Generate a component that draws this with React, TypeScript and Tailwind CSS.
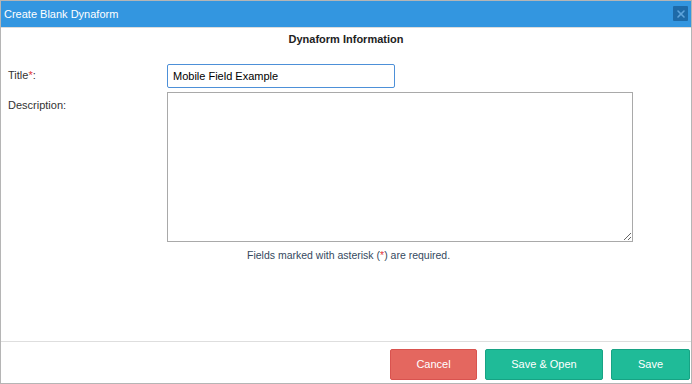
import { X } from "lucide-react";

const font = { fontFamily: '"Liberation Sans", Arial, sans-serif' };

function Label({ text, required }: { text: string; required?: boolean }) {
  return (
    <label className="block w-[166px] shrink-0 pl-[7px] text-[11px] text-[#333]">
      {text}
      {required && <span className="text-[#e2353b]">*</span>}:
    </label>
  );
}

export default function App() {
  return (
    <div
      className="flex h-[384px] w-[692px] flex-col border border-[#b5b5b5] bg-white"
      style={font}
    >
      <div className="flex h-[27px] shrink-0 items-center justify-between border-b border-[#dcdcdc] bg-[#3396e0] pl-[3px] pr-[3px]">
        <span className="text-[11px] text-white">Create Blank Dynaform</span>
        <button className="mb-[1px] flex h-[15px] w-[15px] items-center justify-center rounded-[1px] bg-[#1e6aa8]">
          <X size={12} strokeWidth={3.2} className="text-[#5fa4dc]" />
        </button>
      </div>

      <div className="flex flex-1 flex-col">
        <h2 className="mt-[3px] text-center text-[11px] font-bold text-[#222]">
          Dynaform Information
        </h2>

        <div className="mt-[16px] flex items-center">
          <Label text="Title" required />
          <input
            className="h-[24px] w-[228px] rounded-[2px] border border-[#4d90d8] px-[5px] text-[11px] text-black outline-none"
            defaultValue="Mobile Field Example"
          />
        </div>

        <div className="mt-[4px] flex items-start">
          <div className="w-[166px] shrink-0 pt-[5px]">
            <Label text="Description" />
          </div>
          <textarea className="h-[150px] w-[466px] border border-[#a9a9a9] outline-none" />
        </div>

        <p className="mt-[6px] pl-[246px] text-[10.5px] text-[#34495e]">
          Fields marked with asterisk (<span className="text-[#e2353b]">*</span>) are required.
        </p>
      </div>

      <div className="flex h-[42px] shrink-0 items-end justify-end gap-[8px] border-t border-[#dedede] pb-[3px] pr-[1px]">
        <button className="h-[31px] w-[87px] rounded-[2px] border border-[#d9534f] bg-[#e4675f] text-[11px] text-white">
          Cancel
        </button>
        <button className="h-[31px] w-[118px] rounded-[2px] border border-[#17a384] bg-[#1fbb98] text-[11px] text-white">
          Save &amp; Open
        </button>
        <button className="h-[31px] w-[79px] rounded-[2px] border border-[#17a384] bg-[#1fbb98] text-[11px] text-white">
          Save
        </button>
      </div>
    </div>
  );
}
